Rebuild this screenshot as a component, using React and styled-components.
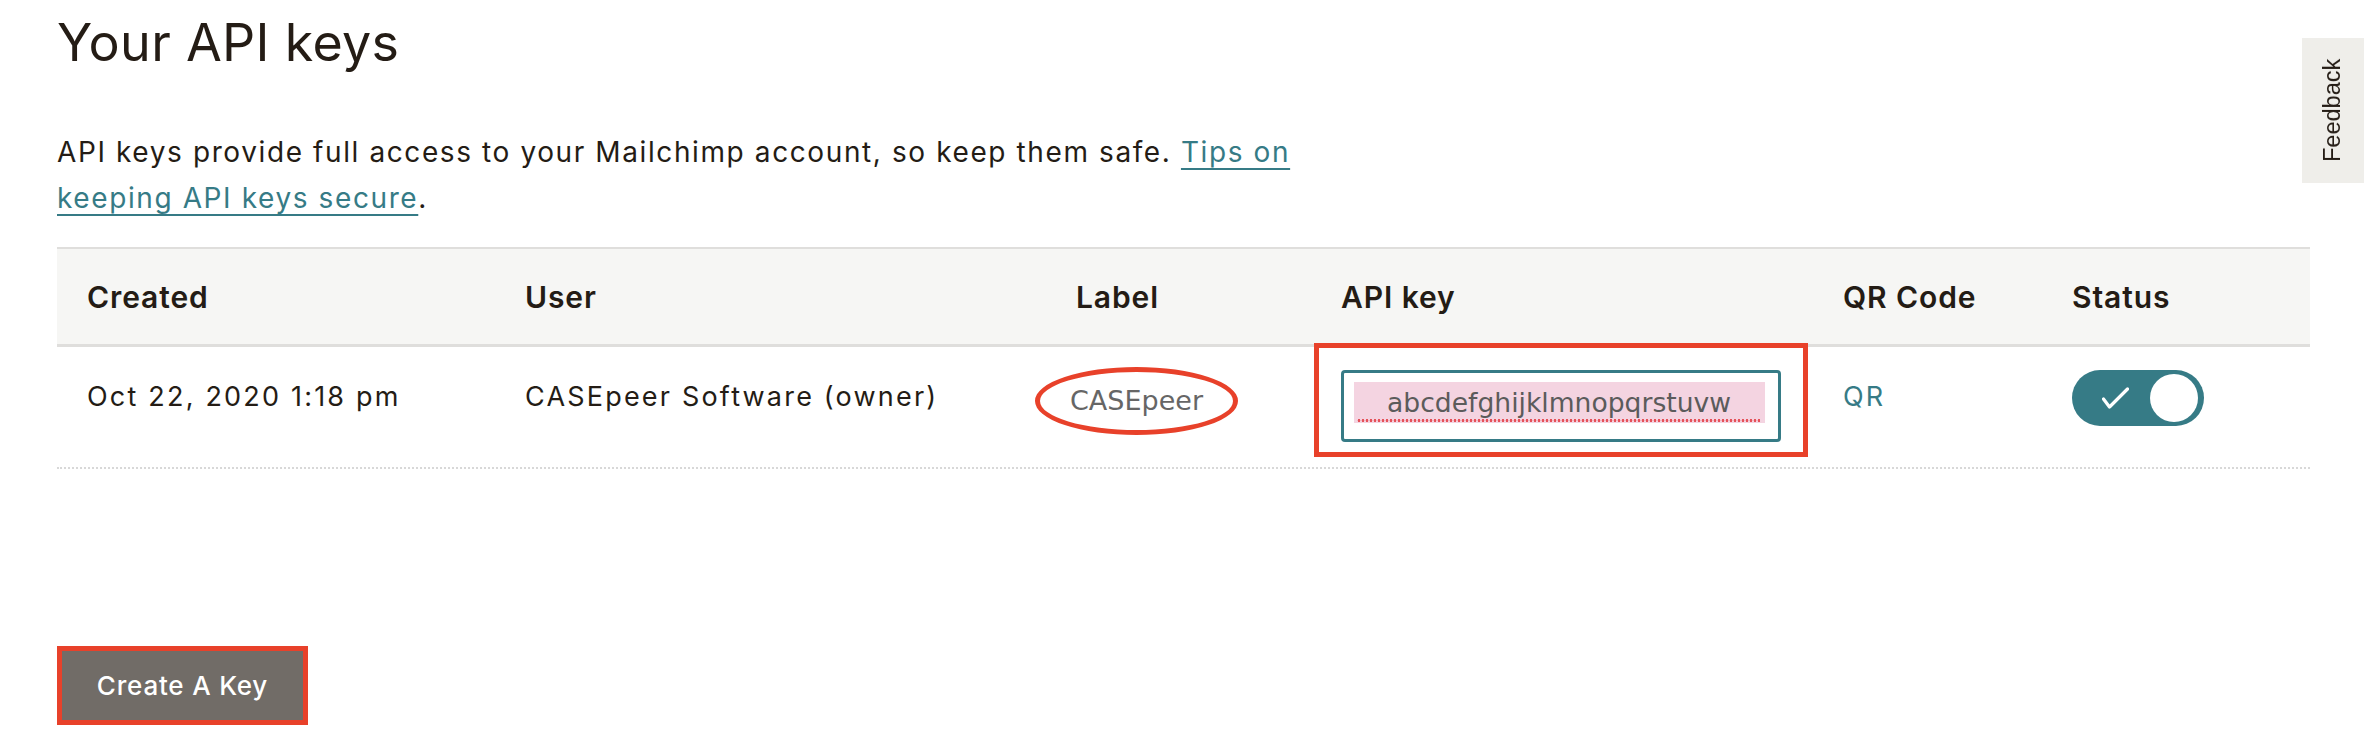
import styled, { createGlobalStyle } from "styled-components";

const teal = "#367b86";
const markup = "#e8412a";

const GlobalStyle = createGlobalStyle`
  body {
    margin: 0;
    background: #ffffff;
    color: #241c15;
    font-family: Inter, "Liberation Sans", sans-serif;
  }
`;

const Page = styled.div`
  padding: 12px 54px 40px 57px;
`;

const Title = styled.h1`
  margin: 0;
  font-size: 52px;
  font-weight: 400;
  line-height: 1.2;
  letter-spacing: 0.3px;
`;

const Intro = styled.p`
  margin: 55px 0 0;
  max-width: 1290px;
  font-size: 28px;
  line-height: 46px;
  letter-spacing: 1.6px;
`;

const TextLink = styled.a`
  color: ${teal};
  text-decoration: underline;
  text-decoration-thickness: 2px;
  text-underline-offset: 6px;
`;

const Table = styled.div`
  margin-top: 26px;
`;

const Row = styled.div`
  display: grid;
  grid-template-columns: 438px 551px 265px 502px 229px 268px;
`;

const HeadRow = styled(Row)`
  height: 95px;
  align-items: center;
  background: #f6f6f4;
  border-top: 2px solid #dfdedc;
  border-bottom: 3px solid #dfdedc;
`;

const HeadCell = styled.div`
  padding-left: 30px;
  font-size: 30px;
  font-weight: 600;
  letter-spacing: 0.9px;
`;

const BodyRow = styled(Row)`
  align-items: start;
  padding: 23px 0 25px;
  border-bottom: 2px dotted #d8d8d8;
`;

const Cell = styled.div`
  padding-left: ${(p) => p.$left ?? 30}px;
  padding-top: ${(p) => p.$top ?? 0}px;
  font-size: 27px;
  line-height: 40px;
  letter-spacing: 2.2px;
  color: ${(p) => p.$color ?? "#241c15"};
`;

const LabelText = styled.span`
  position: relative;
  display: inline-block;
  font-family: "DejaVu Sans", sans-serif;
  font-size: 27px;
  letter-spacing: 0;
  color: #666666;

  &::after {
    content: "";
    position: absolute;
    inset: -14px -35px;
    border: 5px solid ${markup};
    border-radius: 50%;
  }
`;

const Marked = styled.div`
  position: relative;
  width: 440px;

  &::after {
    content: "";
    position: absolute;
    top: -27px;
    left: -27px;
    right: -27px;
    bottom: -15px;
    border: 5px solid ${markup};
  }
`;

const KeyField = styled.div`
  box-sizing: border-box;
  width: 440px;
  height: 72px;
  padding: 9px 13px 0 10px;
  border: 3px solid ${teal};
  border-radius: 4px;
`;

const KeyText = styled.div`
  position: relative;
  height: 41px;
  padding-left: 33px;
  background: #f4d4e1;
  font-family: "DejaVu Sans", sans-serif;
  font-size: 26.6px;
  line-height: 41px;
  letter-spacing: 0;
  color: #5b5b5b;

  &::after {
    content: "";
    position: absolute;
    left: 3px;
    right: 5px;
    bottom: 1px;
    height: 3px;
    background: radial-gradient(circle, #e5525a 1.2px, transparent 1.6px) 0 0 / 4px 3px repeat-x;
  }
`;

const Toggle = styled.div`
  box-sizing: border-box;
  width: 132px;
  height: 56px;
  display: flex;
  align-items: center;
  justify-content: space-between;
  padding: 0 6px 0 30px;
  border-radius: 28px;
  background: ${teal};
`;

const Knob = styled.span`
  width: 48px;
  height: 48px;
  border-radius: 50%;
  background: #ffffff;
`;

const Button = styled.button`
  display: block;
  box-sizing: border-box;
  margin-top: 177px;
  width: 251px;
  height: 79px;
  border: 5px solid ${markup};
  background: #716c67;
  color: #ffffff;
  font-family: Inter, "Liberation Sans", sans-serif;
  font-size: 26px;
  font-weight: 500;
  letter-spacing: 0.8px;
`;

const FeedbackTab = styled.div`
  position: fixed;
  top: 38px;
  right: 0;
  width: 62px;
  height: 145px;
  display: flex;
  align-items: center;
  justify-content: center;
  background: #efeeea;
  writing-mode: vertical-rl;
  transform: rotate(180deg);
  font-family: "Liberation Sans", Arial, sans-serif;
  font-size: 23.5px;
  color: #241c15;
`;

export default function App() {
  return (
    <>
      <GlobalStyle />
      <Page>
        <Title>Your API keys</Title>
        <Intro>
          API keys provide full access to your Mailchimp account, so keep them safe.{" "}
          <TextLink href="#">Tips on keeping API keys secure</TextLink>.
        </Intro>

        <Table>
          <HeadRow>
            <HeadCell>Created</HeadCell>
            <HeadCell>User</HeadCell>
            <HeadCell>Label</HeadCell>
            <HeadCell>API key</HeadCell>
            <HeadCell>QR Code</HeadCell>
            <HeadCell>Status</HeadCell>
          </HeadRow>
          <BodyRow>
            <Cell $top={7}>Oct 22, 2020 1:18 pm</Cell>
            <Cell $top={7}>CASEpeer Software (owner)</Cell>
            <Cell $top={11} $left={24}>
              <LabelText>CASEpeer</LabelText>
            </Cell>
            <Cell>
              <Marked>
                <KeyField>
                  <KeyText>abcdefghijklmnopqrstuvw</KeyText>
                </KeyField>
              </Marked>
            </Cell>
            <Cell $top={7} $color={teal}>QR</Cell>
            <Cell>
              <Toggle>
                <svg width="27" height="22" viewBox="0 0 27 22" fill="none">
                  <path d="M1.5 12 L7.5 20 L25.5 2" stroke="#fff" strokeWidth="3.2" strokeLinecap="round" strokeLinejoin="round" />
                </svg>
                <Knob />
              </Toggle>
            </Cell>
          </BodyRow>
        </Table>

        <Button>Create A Key</Button>
      </Page>
      <FeedbackTab>Feedback</FeedbackTab>
    </>
  );
}
